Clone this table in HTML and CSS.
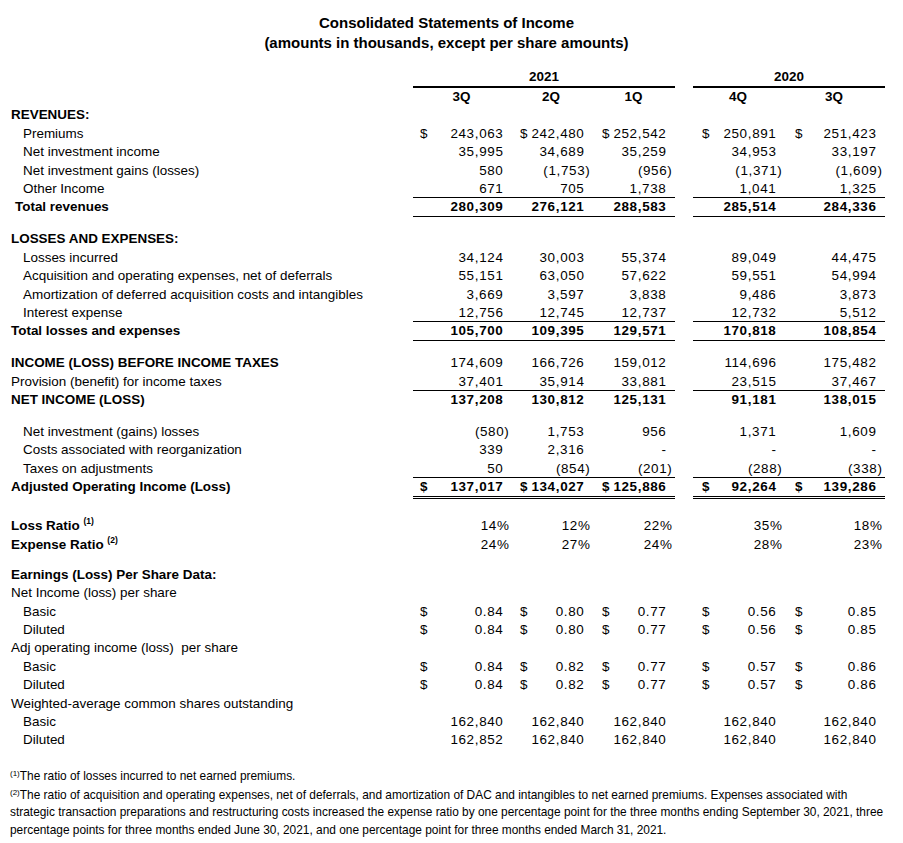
FILE: index.html
```html
<!DOCTYPE html>
<html>
<head>
<meta charset="utf-8">
<title>Consolidated Statements of Income</title>
<link rel="stylesheet" href="styles.css">
</head>
<body>
<div class="page">
  <div class="title">
    <div>Consolidated Statements of Income</div>
    <div>(amounts in thousands, except per share amounts)</div>
  </div>

  <table class="fin">
    <colgroup>
      <col class="w-label"><col class="w17"><col class="w80"><col class="w18"><col class="w64"><col class="w18"><col class="w65"><col class="w18"><col class="w18"><col class="w72"><col class="w19"><col class="w83">
    </colgroup>
    <tr class="yr"><td></td><td colspan="6" class="yh">2021</td><td></td><td colspan="4" class="yh">2020</td></tr>
    <tr class="qr"><td></td><td colspan="2">3Q</td><td colspan="2">2Q</td><td colspan="2">1Q</td><td></td><td colspan="2">4Q</td><td colspan="2">3Q</td></tr>

    <tr><td class="l b">REVENUES:</td><td></td><td></td><td></td><td></td><td></td><td></td><td></td><td></td><td></td><td></td><td></td></tr>
    <tr><td class="l i">Premiums</td><td class="c">$</td><td class="n">243,063</td><td class="c">$</td><td class="n">242,480</td><td class="c">$</td><td class="n">252,542</td><td></td><td class="c">$</td><td class="n">250,891</td><td class="c">$</td><td class="n">251,423</td></tr>
    <tr><td class="l i">Net investment income</td><td></td><td class="n">35,995</td><td></td><td class="n">34,689</td><td></td><td class="n">35,259</td><td></td><td></td><td class="n">34,953</td><td></td><td class="n">33,197</td></tr>
    <tr><td class="l i">Net investment gains (losses)</td><td></td><td class="n">580</td><td></td><td class="n ng">(1,753)</td><td></td><td class="n ng">(956)</td><td></td><td></td><td class="n ng">(1,371)</td><td></td><td class="n ng">(1,609)</td></tr>
    <tr class="u"><td class="l i">Other Income</td><td></td><td class="n">671</td><td></td><td class="n">705</td><td></td><td class="n">1,738</td><td></td><td></td><td class="n">1,041</td><td></td><td class="n">1,325</td></tr>
    <tr class="u b"><td class="l t">Total revenues</td><td></td><td class="n">280,309</td><td></td><td class="n">276,121</td><td></td><td class="n">288,583</td><td></td><td></td><td class="n">285,514</td><td></td><td class="n">284,336</td></tr>
    <tr class="sp1"><td colspan="12"></td></tr>

    <tr><td class="l b">LOSSES AND EXPENSES:</td><td></td><td></td><td></td><td></td><td></td><td></td><td></td><td></td><td></td><td></td><td></td></tr>
    <tr><td class="l i">Losses incurred</td><td></td><td class="n">34,124</td><td></td><td class="n">30,003</td><td></td><td class="n">55,374</td><td></td><td></td><td class="n">89,049</td><td></td><td class="n">44,475</td></tr>
    <tr><td class="l i">Acquisition and operating expenses, net of deferrals</td><td></td><td class="n">55,151</td><td></td><td class="n">63,050</td><td></td><td class="n">57,622</td><td></td><td></td><td class="n">59,551</td><td></td><td class="n">54,994</td></tr>
    <tr><td class="l i">Amortization of deferred acquisition costs and intangibles</td><td></td><td class="n">3,669</td><td></td><td class="n">3,597</td><td></td><td class="n">3,838</td><td></td><td></td><td class="n">9,486</td><td></td><td class="n">3,873</td></tr>
    <tr class="u"><td class="l i">Interest expense</td><td></td><td class="n">12,756</td><td></td><td class="n">12,745</td><td></td><td class="n">12,737</td><td></td><td></td><td class="n">12,732</td><td></td><td class="n">5,512</td></tr>
    <tr class="u b"><td class="l">Total losses and expenses</td><td></td><td class="n">105,700</td><td></td><td class="n">109,395</td><td></td><td class="n">129,571</td><td></td><td></td><td class="n">170,818</td><td></td><td class="n">108,854</td></tr>
    <tr class="sp1"><td colspan="12"></td></tr>

    <tr><td class="l b">INCOME (LOSS) BEFORE INCOME TAXES</td><td></td><td class="n">174,609</td><td></td><td class="n">166,726</td><td></td><td class="n">159,012</td><td></td><td></td><td class="n">114,696</td><td></td><td class="n">175,482</td></tr>
    <tr class="u"><td class="l">Provision (benefit) for income taxes</td><td></td><td class="n">37,401</td><td></td><td class="n">35,914</td><td></td><td class="n">33,881</td><td></td><td></td><td class="n">23,515</td><td></td><td class="n">37,467</td></tr>
    <tr class="b"><td class="l">NET INCOME (LOSS)</td><td></td><td class="n">137,208</td><td></td><td class="n">130,812</td><td></td><td class="n">125,131</td><td></td><td></td><td class="n">91,181</td><td></td><td class="n">138,015</td></tr>
    <tr class="sp2"><td colspan="12"></td></tr>

    <tr><td class="l i">Net investment (gains) losses</td><td></td><td class="n ng">(580)</td><td></td><td class="n">1,753</td><td></td><td class="n">956</td><td></td><td></td><td class="n">1,371</td><td></td><td class="n">1,609</td></tr>
    <tr><td class="l i">Costs associated with reorganization</td><td></td><td class="n">339</td><td></td><td class="n">2,316</td><td></td><td class="n">-</td><td></td><td></td><td class="n">-</td><td></td><td class="n">-</td></tr>
    <tr class="u"><td class="l i">Taxes on adjustments</td><td></td><td class="n">50</td><td></td><td class="n ng">(854)</td><td></td><td class="n ng">(201)</td><td></td><td></td><td class="n ng">(288)</td><td></td><td class="n ng">(338)</td></tr>
    <tr class="b"><td class="l">Adjusted Operating Income (Loss)</td><td class="c">$</td><td class="n">137,017</td><td class="c">$</td><td class="n">134,027</td><td class="c">$</td><td class="n">125,886</td><td></td><td class="c">$</td><td class="n">92,264</td><td class="c">$</td><td class="n">139,286</td></tr>
    <tr class="dbl"><td></td><td></td><td></td><td></td><td></td><td></td><td></td><td></td><td></td><td></td><td></td><td></td></tr>

    <tr><td class="l b">Loss Ratio <sup class="fn">(1)</sup></td><td></td><td class="n ng">14%</td><td></td><td class="n ng">12%</td><td></td><td class="n ng">22%</td><td></td><td></td><td class="n ng">35%</td><td></td><td class="n ng">18%</td></tr>
    <tr><td class="l b">Expense Ratio <sup class="fn">(2)</sup></td><td></td><td class="n ng">24%</td><td></td><td class="n ng">27%</td><td></td><td class="n ng">24%</td><td></td><td></td><td class="n ng">28%</td><td></td><td class="n ng">23%</td></tr>
    <tr class="sp3"><td colspan="12"></td></tr>

    <tr><td class="l b">Earnings (Loss) Per Share Data:</td><td></td><td></td><td></td><td></td><td></td><td></td><td></td><td></td><td></td><td></td><td></td></tr>
    <tr><td class="l">Net Income (loss) per share</td><td></td><td></td><td></td><td></td><td></td><td></td><td></td><td></td><td></td><td></td><td></td></tr>
    <tr><td class="l i">Basic</td><td class="c">$</td><td class="n">0.84</td><td class="c">$</td><td class="n">0.80</td><td class="c">$</td><td class="n">0.77</td><td></td><td class="c">$</td><td class="n">0.56</td><td class="c">$</td><td class="n">0.85</td></tr>
    <tr><td class="l i">Diluted</td><td class="c">$</td><td class="n">0.84</td><td class="c">$</td><td class="n">0.80</td><td class="c">$</td><td class="n">0.77</td><td></td><td class="c">$</td><td class="n">0.56</td><td class="c">$</td><td class="n">0.85</td></tr>
    <tr><td class="l">Adj operating income (loss)&nbsp; per share</td><td></td><td></td><td></td><td></td><td></td><td></td><td></td><td></td><td></td><td></td><td></td></tr>
    <tr><td class="l i">Basic</td><td class="c">$</td><td class="n">0.84</td><td class="c">$</td><td class="n">0.82</td><td class="c">$</td><td class="n">0.77</td><td></td><td class="c">$</td><td class="n">0.57</td><td class="c">$</td><td class="n">0.86</td></tr>
    <tr><td class="l i">Diluted</td><td class="c">$</td><td class="n">0.84</td><td class="c">$</td><td class="n">0.82</td><td class="c">$</td><td class="n">0.77</td><td></td><td class="c">$</td><td class="n">0.57</td><td class="c">$</td><td class="n">0.86</td></tr>
    <tr><td class="l">Weighted-average common shares outstanding</td><td></td><td></td><td></td><td></td><td></td><td></td><td></td><td></td><td></td><td></td><td></td></tr>
    <tr><td class="l i">Basic</td><td></td><td class="n">162,840</td><td></td><td class="n">162,840</td><td></td><td class="n">162,840</td><td></td><td></td><td class="n">162,840</td><td></td><td class="n">162,840</td></tr>
    <tr><td class="l i">Diluted</td><td></td><td class="n">162,852</td><td></td><td class="n">162,840</td><td></td><td class="n">162,840</td><td></td><td></td><td class="n">162,840</td><td></td><td class="n">162,840</td></tr>
  </table>

  <div class="notes">
    <p class="note"><sup class="nf">(1)</sup>The ratio of losses incurred to net earned premiums.</p>
    <p class="note note2"><sup class="nf">(2)</sup>The ratio of acquisition and operating expenses, net of deferrals, and amortization of DAC and intangibles to net earned premiums. Expenses associated with<br>strategic transaction preparations and restructuring costs increased the expense ratio by one percentage point for the three months ending September 30, 2021, three<br>percentage points for three months ended June 30, 2021, and one percentage point for three months ended March 31, 2021.</p>
  </div>
</div>
</body>
</html>
```
FILE: styles.css
```css
body {
  margin: 0;
  background: #ffffff;
  color: #000000;
  font-family: "Liberation Sans", Arial, sans-serif;
}

.page {
  width: 893px;
}

.title {
  padding-top: 12.5px;
  text-align: center;
  font-weight: bold;
  font-size: 15px;
  line-height: 20px;
}

.fin {
  margin-top: 13.5px;
  width: 885px;
  table-layout: fixed;
  border-collapse: separate;
  border-spacing: 0;
  font-size: 13.45px;
}

.w-label { width: 413px; }
.w17 { width: 17px; }
.w18 { width: 18px; }
.w19 { width: 19px; }
.w64 { width: 64px; }
.w65 { width: 65px; }
.w72 { width: 72px; }
.w80 { width: 80px; }
.w83 { width: 83px; }

.fin td {
  padding: 0;
  height: 18.4px;
  line-height: 18.4px;
  white-space: nowrap;
  vertical-align: middle;
}

/* header rows */
.fin .yr td {
  height: 22px;
  font-weight: bold;
  text-align: center;
}
.fin .yr td.yh {
  box-shadow: inset 0 -2px #000;
}
.fin .qr td {
  height: 18px;
  font-weight: bold;
  text-align: center;
}

/* labels */
.l { padding-left: 11px !important; }
.l.i { padding-left: 23px !important; }
.l.t { padding-left: 15px !important; }
.b, .b td { font-weight: bold; }

/* per-column offsets */
.fin td:nth-child(2)  { --d: 7px; }
.fin td:nth-child(4)  { --d: 10px; }
.fin td:nth-child(6)  { --d: 10px; }
.fin td:nth-child(9)  { --d: 9px; }
.fin td:nth-child(11) { --d: 12px; }
.fin td:nth-child(3)  { --p: 0.5px; }
.fin td:nth-child(5)  { --p: 1.5px; }
.fin td:nth-child(7)  { --p: 2.5px; }
.fin td:nth-child(10) { --p: 0.5px; }
.fin td:nth-child(12) { --p: 2.5px; }

.fin td.c {
  padding-left: var(--d);
  text-align: left;
}
.fin td.n {
  text-align: right;
  letter-spacing: 0.65px;
  padding-right: calc(var(--p) + 6px);
}
.fin td.n.ng {
  padding-right: var(--p);
}

/* rules */
.fin tr.u td:not(:first-child):not(:nth-child(8)) {
  box-shadow: inset 0 -1px #000;
}
.fin tr.dbl td {
  height: 21.1px;
}
.fin tr.dbl td:not(:first-child):not(:nth-child(8)) {
  box-shadow: inset 0 1px #000, inset 0 2px #fff, inset 0 3px #000;
}

/* spacers */
.fin tr.sp1 td { height: 13.6px; }
.fin tr.sp2 td { height: 13px; }
.fin tr.sp3 td { height: 11.5px; }

sup.fn {
  font-size: 8.5px;
  line-height: 0;
  vertical-align: 6px;
}

/* footnotes */
.notes {
  margin-top: 18px;
  padding-left: 10px;
  font-size: 11.9px;
  line-height: 17.5px;
}
.note {
  margin: 0;
  white-space: nowrap;
}
.note2 {
  margin-top: 1.5px;
}
sup.nf {
  font-size: 8px;
  line-height: 0;
  vertical-align: 4px;
}
```
